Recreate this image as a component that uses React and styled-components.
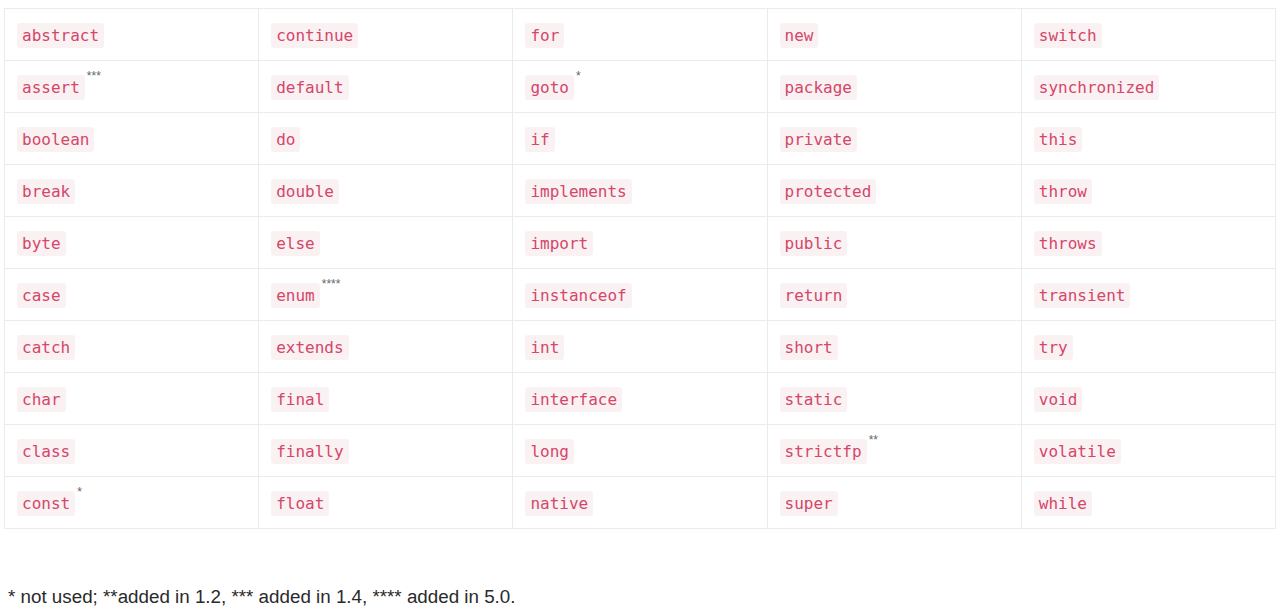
import React from 'react';
import styled, { createGlobalStyle } from 'styled-components';

const rows = [
  [['abstract'], ['continue'], ['for'], ['new'], ['switch']],
  [['assert', '***'], ['default'], ['goto', '*'], ['package'], ['synchronized']],
  [['boolean'], ['do'], ['if'], ['private'], ['this']],
  [['break'], ['double'], ['implements'], ['protected'], ['throw']],
  [['byte'], ['else'], ['import'], ['public'], ['throws']],
  [['case'], ['enum', '****'], ['instanceof'], ['return'], ['transient']],
  [['catch'], ['extends'], ['int'], ['short'], ['try']],
  [['char'], ['final'], ['interface'], ['static'], ['void']],
  [['class'], ['finally'], ['long'], ['strictfp', '**'], ['volatile']],
  [['const', '*'], ['float'], ['native'], ['super'], ['while']],
];

function App() {
  return (
    <>
      <GlobalStyle />
      <Page>
        <Table>
          <tbody>
            {rows.map((row, i) => (
              <tr key={i}>
                {row.map(([word, note]) => (
                  <Cell key={word}>
                    <Code>{word}</Code>
                    {note && <Note>{note}</Note>}
                  </Cell>
                ))}
              </tr>
            ))}
          </tbody>
        </Table>
        <Footnote>* not used; **added in 1.2, *** added in 1.4, **** added in 5.0.</Footnote>
      </Page>
    </>
  );
}

const GlobalStyle = createGlobalStyle`
  body {
    margin: 0;
    background: #fff;
    font-family: "Liberation Sans", Arial, sans-serif;
    color: #333;
  }
`;

const Page = styled.div`
  padding: 8px 4px 0 4px;
`;

const Table = styled.table`
  width: 1272px;
  border-collapse: collapse;
  table-layout: fixed;
`;

const Cell = styled.td`
  height: 49px;
  padding: 2px 12px 0 12px;
  border: 1px solid #ebebeb;
  vertical-align: middle;
  white-space: nowrap;
`;

const Code = styled.code`
  display: inline-block;
  font-family: "DejaVu Sans Mono", "Liberation Mono", monospace;
  font-size: 16px;
  line-height: 25px;
  padding: 0 5px;
  color: #d4466a;
  background: #faf1f3;
  border-radius: 3px;
`;

const Note = styled.sup`
  font-size: 12px;
  color: #666;
  margin-left: 2px;
  vertical-align: 13px;
  line-height: 0;
`;

const Footnote = styled.p`
  margin: 57px 0 0 4px;
  font-size: 18.8px;
  line-height: 22px;
  color: #2a2a2a;
`;

export default App;
